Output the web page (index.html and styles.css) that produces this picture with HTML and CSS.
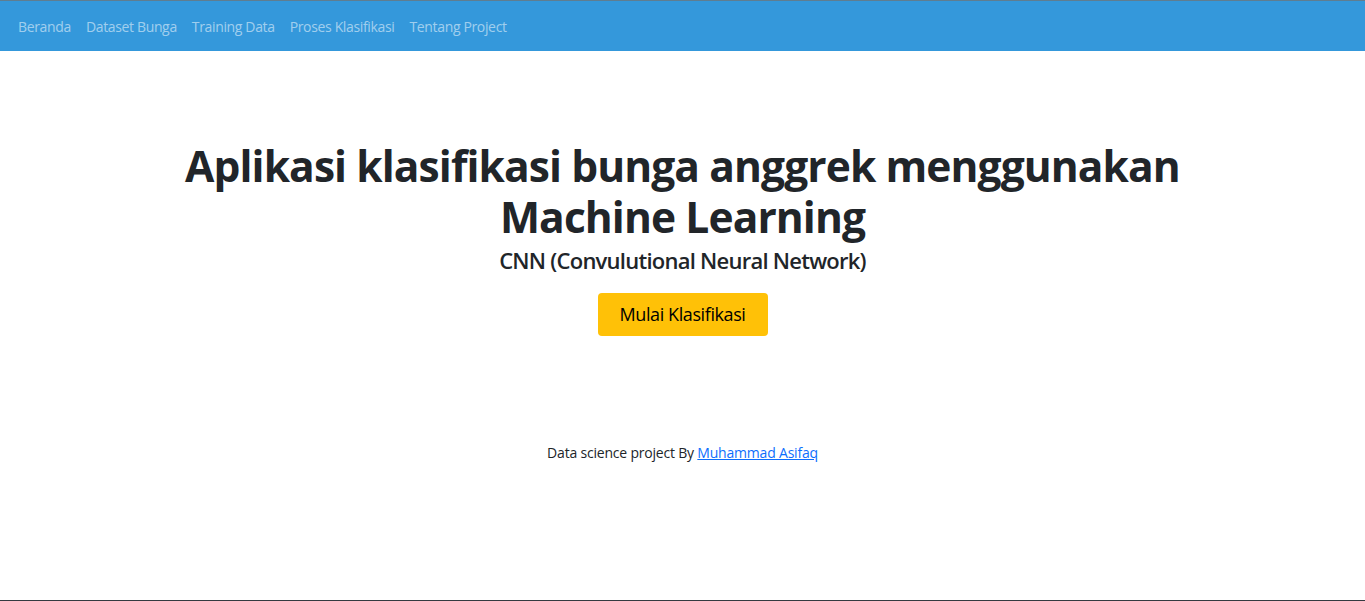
FILE: index.html
```html
<!DOCTYPE html>
<html lang="id">
<head>
<meta charset="utf-8">
<title>Klasifikasi Bunga Anggrek</title>
<link rel="stylesheet" href="styles.css">
</head>
<body>
<div class="page">
  <nav class="navbar">
    <a class="nav-link" href="#">Beranda</a>
    <a class="nav-link" href="#">Dataset Bunga</a>
    <a class="nav-link" href="#">Training Data</a>
    <a class="nav-link" href="#">Proses Klasifikasi</a>
    <a class="nav-link" href="#">Tentang Project</a>
  </nav>
  <main class="hero">
    <h1 class="title">Aplikasi klasifikasi bunga anggrek menggunakan<br>Machine Learning</h1>
    <h4 class="subtitle">CNN (Convulutional Neural Network)</h4>
    <a class="btn" href="#">Mulai Klasifikasi</a>
  </main>
  <footer class="footer">Data science project By <a href="#" class="footer-link">Muhammad Asifaq</a></footer>
</div>
</body>
</html>
```
FILE: styles.css
```css
* { box-sizing: border-box; }
html, body { margin: 0; padding: 0; }
body {
  font-family: "Open Sans", "Noto Sans", sans-serif;
  color: #212529;
  background: #fff;
}
.page {
  height: 601px;
  border-top: 1px solid #5f7d90;
  border-bottom: 1px solid #343a40;
  display: flex;
  flex-direction: column;
}
.navbar {
  background: #3498db;
  height: 50px;
  display: flex;
  align-items: center;
  padding: 0 10.5px;
}
.nav-link {
  color: rgba(255,255,255,.55);
  text-decoration: none;
  font-size: 14px;
  letter-spacing: -0.35px;
  padding: 0 7.5px;
}
.hero {
  text-align: center;
  padding-top: 89px;
}
.title {
  margin: 0;
  font-size: 42.5px;
  line-height: 51px;
  font-weight: 700;
  letter-spacing: -0.9px;
}
.subtitle {
  margin: 5px 0 0;
  font-size: 22px;
  font-weight: 600;
  letter-spacing: -0.75px;
  line-height: 26px;
}
.btn {
  display: inline-block;
  margin-top: 20px;
  width: 170px;
  height: 43px;
  line-height: 43px;
  background: #ffc107;
  color: #000;
  border-radius: 4px;
  text-decoration: none;
  font-size: 18px;
  letter-spacing: -0.4px;
}
.footer {
  text-align: center;
  font-size: 14px;
  letter-spacing: -0.2px;
  margin-top: 107px;
}
.footer-link { color: #0d6efd; }
```
